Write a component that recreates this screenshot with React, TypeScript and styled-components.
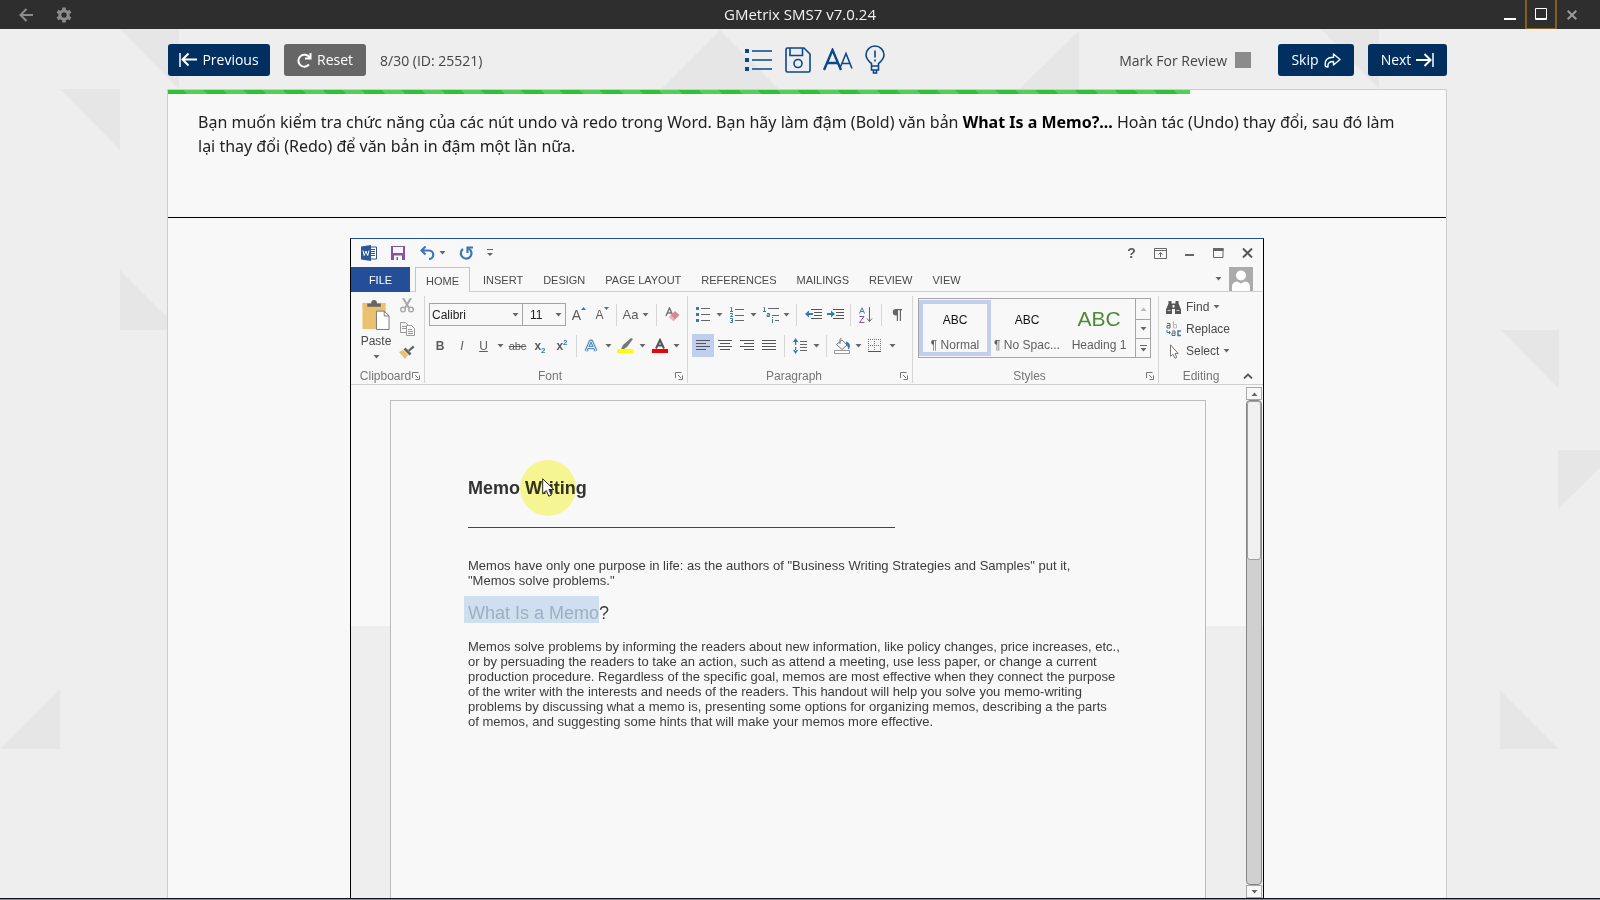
import React from "react";
import styled, { createGlobalStyle, css } from "styled-components";

const UI = '"Open Sans", "Noto Sans", sans-serif';
const ARIAL = '"Liberation Sans", Arial, sans-serif';
const NAVY = "#002f60";
const WORD_BLUE = "#244f98";
const INK = "#5c5c5c";
const ACCENT = "#3a77b5";

const GlobalStyle = createGlobalStyle`
  * { box-sizing: border-box; }
  body { margin: 0; background: #eeeeee; font-family: ${UI}; }
  button { font: inherit; color: inherit; background: none; border: 0; padding: 0; margin: 0; cursor: pointer; }
  svg { display: block; flex: none; }
  h1, h2, p { margin: 0; }
`;

const Shell = styled.div`
  position: relative;
  height: 100vh;
  display: flex;
  flex-direction: column;
  overflow: hidden;
`;

const Backdrop = styled.svg<{ $side: "left" | "right" }>`
  position: absolute;
  top: 0;
  ${(p) => p.$side}: 0;
  z-index: -1;
`;

/* ---------- application title bar ---------- */

const TitleBar = styled.header`
  flex: none;
  height: 29px;
  display: grid;
  grid-template-columns: 1fr auto 1fr;
  background: #2e2e2e;
  color: #f2f2f2;
`;

const TitleText = styled.h1`
  font-size: 15px;
  line-height: 29px;
  font-weight: 400;
`;

const TitleTools = styled.div<{ $end?: boolean }>`
  display: flex;
  align-items: stretch;
  ${(p) =>
    p.$end
      ? css`justify-content: flex-end; padding-right: 13px;`
      : css`padding-left: 8px;`}
`;

const TitleButton = styled.button<{ $focus?: boolean; $wide?: boolean }>`
  width: ${(p) => (p.$wide ? 37 : 30)}px;
  display: flex;
  align-items: center;
  justify-content: center;
  ${(p) =>
    p.$focus &&
    css`
      width: 32px;
      border: 2px solid #83601f;
      border-top: 0;
      border-bottom-width: 1px;
    `}
`;

/* ---------- test toolbar ---------- */

const Main = styled.main`
  flex: 1;
  min-height: 0;
  display: flex;
  flex-direction: column;
  padding: 0 153px 0 167px;
`;

const Toolbar = styled.div`
  flex: none;
  height: 60px;
  padding-top: 2px;
  display: grid;
  grid-template-columns: 1fr auto 1fr;
  align-items: center;
  font-size: 14px;
  color: #444;
`;

const ToolSide = styled.div<{ $end?: boolean }>`
  display: flex;
  align-items: center;
  gap: 14px;
  padding-left: 1px;
  justify-content: ${(p) => (p.$end ? "flex-end" : "flex-start")};
`;

const ToolCenter = styled.div`
  display: flex;
  align-items: center;
  gap: 12px;
  padding-left: 14px;
`;

const ActionButton = styled.button<{ $tone?: string; $w: number }>`
  width: ${(p) => p.$w}px;
  height: 32px;
  display: flex;
  align-items: center;
  justify-content: center;
  gap: 5px;
  border-radius: 3px;
  background: ${(p) => p.$tone ?? NAVY};
  color: #fff;
  font-size: 14px;
  line-height: 20px;
`;

const ReviewLabel = styled.label`
  display: flex;
  align-items: center;
  gap: 8px;
  margin-right: 13px;
`;

const ReviewBox = styled.input`
  appearance: none;
  width: 16px;
  height: 16px;
  margin: 0;
  background: #8b8b8b;
`;

/* ---------- question card ---------- */

const Card = styled.section`
  flex: 1;
  min-height: 0;
  display: flex;
  flex-direction: column;
  background: #f8f8f8;
  border: 1px solid #cdcdcd;
  border-bottom: 0;
`;

const Progress = styled.div`
  flex: none;
  height: 4px;
`;

const ProgressFill = styled.div`
  height: 100%;
  background: repeating-linear-gradient(45deg, #30c036 0 14px, #50d155 14px 28px);
`;

const Question = styled.div`
  flex: none;
  height: 124px;
  padding: 16px 44px 0 30px;
  border-bottom: 1px solid #000;
  color: #222;
  font-family: "Noto Sans", "Open Sans", sans-serif;
  font-size: 16px;
  line-height: 24px;

  b { color: #000; }
`;

const Stage = styled.div`
  flex: 1;
  min-height: 0;
  padding-top: 20px;
  display: flex;
  justify-content: center;
`;

/* ---------- word processor ---------- */

const WordWindow = styled.div`
  width: 914px;
  display: flex;
  flex-direction: column;
  border: 1px solid #000;
  border-top-color: ${WORD_BLUE};
  border-bottom: 0;
  font-family: ${ARIAL};
  font-size: 12px;
  color: #4a4a4a;
`;

const QuickBar = styled.div`
  flex: none;
  height: 28px;
  display: flex;
  align-items: center;
  padding: 0 1px 0 10px;
`;

const Grow = styled.div`
  flex: 1;
`;

const TabRow = styled.nav`
  flex: none;
  height: 25px;
  display: flex;
  align-items: stretch;
  border-bottom: 1px solid #cfcfcf;
  font-size: 11px;
`;

const FileTab = styled.button`
  width: 59px;
  height: 25px;
  background: ${WORD_BLUE};
  color: #fff;
`;

const Tab = styled.button<{ $active?: boolean }>`
  padding: 2px 10px 0;
  height: 24px;
  ${(p) =>
    p.$active &&
    css`
      height: 25px;
      margin: 0 3px 0 5px;
      background: #f8f8f8;
      border: 1px solid #c4c4c4;
      border-bottom: 0;
    `}
`;

const Account = styled.button`
  display: flex;
  align-items: center;
  gap: 7px;
  margin-right: 10px;
`;

const Ribbon = styled.div`
  flex: none;
  height: 93px;
  display: flex;
  padding-top: 4px;
  border-bottom: 1px solid #cfcfcf;
`;

const Group = styled.section<{ $w?: number }>`
  ${(p) => (p.$w ? `width: ${p.$w}px;` : "flex: 1;")}
  height: 87px;
  display: flex;
  flex-direction: column;
  ${(p) => p.$w && "border-right: 1px solid #d6d6d6;"}
`;

const GroupBody = styled.div<{ $row?: boolean }>`
  flex: 1;
  display: flex;
  flex-direction: ${(p) => (p.$row ? "row" : "column")};
  padding: ${(p) => (p.$row ? "2px 0 0 5px" : "7px 0 0 4px")};
  gap: ${(p) => (p.$row ? 0 : 8)}px;
`;

const GroupFooter = styled.div<{ $indent?: boolean }>`
  flex: none;
  height: 14px;
  display: flex;
  align-items: center;
  padding: 0 4px 0 ${(p) => (p.$indent ? 8 : 0)}px;
  font-size: 12px;
  line-height: 14px;
  color: #767676;

  span { flex: 1; text-align: center; }
`;

const CollapseButton = styled.button`
  width: 14px;
  margin-right: 2px;
`;

const ToolRow = styled.div`
  height: 23px;
  display: flex;
  align-items: center;
`;

const Tool = styled.button<{ $w: number; $on?: boolean }>`
  width: ${(p) => p.$w}px;
  height: 23px;
  display: flex;
  align-items: center;
  justify-content: center;
  color: ${INK};
  background: ${(p) => (p.$on ? "#c0cfee" : "none")};
`;

const Divider = styled.i<{ $m: number }>`
  width: 1px;
  height: 22px;
  margin: 0 ${(p) => p.$m}px;
  background: #d6d6d6;
`;

const Letter = styled.span<{ $s: number; $b?: boolean }>`
  font-size: ${(p) => p.$s}px;
  font-weight: ${(p) => (p.$b ? 700 : 400)};

  sub, sup { font-size: 8px; line-height: 0; color: ${ACCENT}; }
`;

const SelectBox = styled.span<{ $w: number }>`
  position: relative;
  width: ${(p) => p.$w}px;
  height: 23px;

  & + & { margin-left: -1px; }

  svg { position: absolute; right: 4px; top: 10px; pointer-events: none; }
`;

const Select = styled.select<{ $pad: number }>`
  appearance: none;
  width: 100%;
  height: 100%;
  margin: 0;
  padding: 0 0 0 ${(p) => p.$pad}px;
  border: 1px solid #a5a5a5;
  border-radius: 0;
  background: #f8f8f8;
  font: 12px ${ARIAL};
  color: #222;
`;

const Paste = styled.button`
  width: 40px;
  padding-top: 2px;
  display: flex;
  flex-direction: column;
  align-items: center;
  align-self: flex-start;
  gap: 4px;
  font-size: 12px;
  line-height: 14px;

  svg + svg { margin-top: 3px; }
`;

const ClipStack = styled.div`
  display: flex;
  flex-direction: column;
  align-items: center;
  width: 22px;
  gap: 9px;
`;

const Gallery = styled.div`
  display: flex;
  width: 233px;
  height: 60px;
  border: 1px solid #a5a5a5;
`;

const StyleCard = styled.button<{ $on?: boolean }>`
  width: 72px;
  height: 56px;
  margin-top: 1px;
  padding-top: 6px;
  border: 4px solid ${(p) => (p.$on ? "#c0cfee" : "transparent")};
  display: flex;
  flex-direction: column;
  align-items: center;
  white-space: nowrap;
  color: #5f5f5f;
`;

const Sample = styled.span<{ $big?: boolean }>`
  height: 28px;
  font-size: ${(p) => (p.$big ? 21 : 12)}px;
  line-height: ${(p) => (p.$big ? 18 : 20)}px;
  color: ${(p) => (p.$big ? "#4f8a35" : "#111")};
`;

const Spinner = styled.div`
  width: 15px;
  margin-left: auto;
  border-left: 1px solid #a5a5a5;
  display: grid;
  grid-template-rows: 20px 19px 19px;

  button { display: flex; align-items: center; justify-content: center; }
  button + button { border-top: 1px solid #a5a5a5; }
`;

const EditList = styled.div`
  flex: 1;
  display: flex;
  flex-direction: column;
  padding-left: 7px;
`;

const EditItem = styled.button`
  height: 22px;
  display: flex;
  align-items: center;
  gap: 4px;
`;

/* ---------- document ---------- */

const Workspace = styled.div`
  flex: 1;
  min-height: 0;
  display: flex;
  padding-left: 39px;
  background: linear-gradient(#f8f8f8 241px, #eeeeee 241px);
`;

const Page = styled.article`
  flex: 1;
  margin-top: 15px;
  padding: 74px 77px 0;
  background: #f8f8f8;
  border: 1px solid #bdbdbd;
  border-bottom: 0;
  color: #3c3c3c;
`;

const DocTitle = styled.h2`
  position: relative;
  width: max-content;
  font-size: 18px;
  line-height: 26px;
  font-weight: 700;
  color: #333;
`;

const Rule = styled.hr`
  width: 427px;
  height: 1px;
  margin: 26px 0 30px;
  border: 0;
  background: #444;
`;

const DocText = styled.p`
  font-size: 13px;
  line-height: 15px;
  white-space: nowrap;
`;

const DocHeading = styled.h2`
  margin: 8px 0 16px -4px;
  display: flex;
  font-size: 18px;
  line-height: 35px;
  font-weight: 400;
  height: 27px;
`;

const Selected = styled.mark`
  height: 27px;
  padding-left: 4px;
  background: #cfdff0;
  color: #9dafc5;
`;

const Pointer = styled.svg`
  position: absolute;
  left: 52px;
  top: -15px;
  mix-blend-mode: multiply;
`;

const PointerArrow = styled.svg`
  position: absolute;
  left: 74px;
  top: 2px;
`;

const ScrollBar = styled.div`
  width: 17px;
  margin-left: 40px;
  padding: 2px 1px 0 0;
  display: flex;
  flex-direction: column;
`;

const ScrollButton = styled.button`
  height: 13px;
  flex: none;
  display: flex;
  align-items: center;
  justify-content: center;
  border: 1px solid #a8a8a8;
  background: #f8f8f8;
`;

const ScrollTrack = styled.div`
  flex: 1;
  border: 1px solid #858585;
  border-radius: 4px;
  background: #d0d0d0;
`;

const ScrollThumb = styled.div`
  height: 159px;
  border: 1px solid #a0a0a0;
  border-radius: 3px;
  background: #f0f0f0;
`;

const BottomEdge = styled.div`
  flex: none;
  height: 2px;
  background: #8a8b9c;
  border-top: 1px solid #10131f;
`;

/* ---------- icons ---------- */

const Caret = ({ color = "#666" }: { color?: string }) => (
  <svg width="7" height="4" viewBox="0 0 7 4"><path d="M0.5 0h6l-3 3.5z" fill={color} /></svg>
);

const CaretUp = ({ color = "#666" }: { color?: string }) => (
  <svg width="7" height="4" viewBox="0 0 7 4"><path d="M0.5 4h6l-3-3.5z" fill={color} /></svg>
);

const Lines = ({ widths, align = 0 }: { widths: number[]; align?: number }) => (
  <svg width="14" height="11" viewBox="0 0 14 11" fill="#555">
    {widths.map((w, i) => (
      <rect key={i} x={(14 - w) * align} y={i * 3} width={w} height="1" />
    ))}
  </svg>
);

const Launcher = () => (
  <svg width="8" height="8" viewBox="0 0 8 8" fill="none" stroke="#777">
    <path d="M0.5 6V0.5H6.5M3 3l3 3M7.5 3.5v4h-4" />
  </svg>
);

const LaunchButton = ({ label }: { label: string }) => (
  <button aria-label={label}><Launcher /></button>
);

const Indent = ({ inc }: { inc?: boolean }) => (
  <svg width="17" height="11" viewBox="0 0 17 11">
    <path d="M6 .5h11M9 3.500h8M9 6.500h8M6 9.500h11" stroke="#555" />
    {inc ? (
      <path d="M0 4h4V1.500L8 5 4 8.500V6H0z" fill={ACCENT} />
    ) : (
      <path d="M8 4H4V1.500L0 5l4 3.500V6h4z" fill={ACCENT} />
    )}
  </svg>
);

export default function App() {
  return (
    <>
      <GlobalStyle />
      <Shell>
        <Backdrop $side="left" width="1100" height="900" viewBox="0 0 1100 900" fill="#e6e6e6">
          <path d="M120 29h59v60zM60 89h60v61zM120 270l60 60h-60zM0 749l60-60v60zM720 30l60 60H660zM1018 90l61-59v59z" />
        </Backdrop>
        <Backdrop $side="right" width="300" height="900" viewBox="1300 0 300 900" fill="#e6e6e6">
          <path d="M1321 29h58v60zM1501 330h58v59zM1558 450h60l-60 59zM1500 690l59 59h-59z" />
        </Backdrop>

        <TitleBar>
          <TitleTools>
            <TitleButton $wide aria-label="Back">
              <svg width="15" height="14" viewBox="0 0 15 14" fill="none" stroke="#8c8c8c" strokeWidth="2">
                <path d="M14 7H2M7.500 1L1.500 7l6 6" />
              </svg>
            </TitleButton>
            <TitleButton $wide aria-label="Settings">
              <svg width="16" height="16" viewBox="0 0 16 16">
                <circle cx="8" cy="8" r="4.200" fill="none" stroke="#8c8c8c" strokeWidth="3" />
                <path d="M8 .5v3M8 12.500v3M1.500 4.250l2.600 1.500M11.900 10.250l2.600 1.500M1.500 11.750l2.600-1.500M11.900 5.750l2.600-1.500" stroke="#8c8c8c" strokeWidth="3.600" />
              </svg>
            </TitleButton>
          </TitleTools>
          <TitleText>GMetrix SMS7 v7.0.24</TitleText>
          <TitleTools $end>
            <TitleButton aria-label="Minimize">
              <svg width="12" height="12" viewBox="0 0 12 12"><rect y="9" width="12" height="2" fill="#fff" /></svg>
            </TitleButton>
            <TitleButton $focus aria-label="Maximize">
              <svg width="12" height="12" viewBox="0 0 12 12" fill="none" stroke="#fff">
                <path d="M.5 .5h11v11H.5zM0 10.500h12" />
              </svg>
            </TitleButton>
            <TitleButton aria-label="Close">
              <svg width="10" height="10" viewBox="0 0 10 10" stroke="#9a9a9a" strokeWidth="2">
                <path d="M.7 .7l8.600 8.600M9.300 .7L.7 9.300" />
              </svg>
            </TitleButton>
          </TitleTools>
        </TitleBar>

        <Main>
          <Toolbar>
            <ToolSide>
              <ActionButton $w={102}>
                <svg width="18" height="16" viewBox="0 0 18 16" fill="none" stroke="#fff" strokeWidth="2">
                  <path d="M1 1v14" strokeWidth="1.500" /><path d="M18 7.500H4M9.500 1.500l-6 6 6 6" />
                </svg>
                Previous
              </ActionButton>
              <ActionButton $w={82} $tone="#666666">
                <svg width="15" height="15" viewBox="0 0 15 15" fill="none" stroke="#fff" strokeWidth="2">
                  <path d="M12 11.500A6 6 0 1 1 12.500 4.500M13.500 0v5.500H8" />
                </svg>
                Reset
              </ActionButton>
              <span>8/30 (ID: 25521)</span>
            </ToolSide>
            <ToolCenter>
              <button aria-label="Task list">
                <svg width="30" height="26" viewBox="0 0 30 26" fill="#0b478c">
                  <path d="M2 2h4v4H2zM2 11h4v4H2zM2 20h4v4H2zM9 3.200h20v1.600H9zM9 12.200h20v1.600H9zM9 21.200h20v1.600H9z" />
                </svg>
              </button>
              <button aria-label="Save">
                <svg width="26" height="26" viewBox="0 0 26 26" fill="none" stroke="#0b478c" strokeWidth="1.600">
                  <path d="M1 2.500Q1 1 2.500 1H19l6 6v16.500q0 1.500-1.500 1.500h-21Q1 25 1 23.500zM5 1v7.500h12.500V1" />
                  <circle cx="13" cy="16.500" r="4" />
                </svg>
              </button>
              <button aria-label="Text size">
                <svg width="30" height="24" viewBox="0 0 30 24" fill="none" stroke="#0b478c">
                  <path d="M1 22L9.500 2 18 22M4 15h11" strokeWidth="2.400" />
                  <path d="M17 20L23 5.500 29 20.500M19 15.500h8" strokeWidth="1.600" />
                </svg>
              </button>
              <button aria-label="Hint">
                <svg width="20" height="30" viewBox="0 0 20 30" fill="none" stroke="#0b478c" strokeWidth="1.600">
                  <path d="M6.500 21v-2.500C3.500 16 1 14 1 10a9 9 0 0 1 18 0c0 4-2.500 6-5.500 8.500V21zM6.500 21v4h7v-4M8.500 25v3h3v-3" />
                  <path d="M10 5.500v7M10 14.500v2" />
                </svg>
              </button>
            </ToolCenter>
            <ToolSide $end>
              <ReviewLabel>
                Mark For Review
                <ReviewBox type="checkbox" />
              </ReviewLabel>
              <ActionButton $w={76}>
                Skip
                <svg width="17" height="15" viewBox="0 0 17 15" fill="none" stroke="#fff" strokeWidth="1.400">
                  <path d="M1.500 13.500C0 7 4 4 9.500 4.200V1l6.500 5.500-6.500 5.500V8.500C5.500 8.500 3.500 10 4 14z" strokeLinejoin="round" />
                </svg>
              </ActionButton>
              <ActionButton $w={79}>
                Next
                <svg width="18" height="16" viewBox="0 0 18 16" fill="none" stroke="#fff" strokeWidth="2">
                  <path d="M17 1v14" strokeWidth="1.500" /><path d="M0 8h14M8.500 2l6 6-6 6" />
                </svg>
              </ActionButton>
            </ToolSide>
          </Toolbar>

          <Card>
            <Progress role="progressbar" aria-label="Test progress" aria-valuenow={80}>
              <ProgressFill style={{ width: "80%" }} />
            </Progress>
            <Question>
              Bạn muốn kiểm tra chức năng của các nút undo và redo trong Word. Bạn hãy làm đậm (Bold) văn bản{" "}
              <b>What Is a Memo?...</b> Hoàn tác (Undo) thay đổi, sau đó làm lại thay đổi (Redo) để văn bản in đậm
              một lần nữa.
            </Question>

            <Stage>
              <WordWindow>
                <QuickBar>
                  <svg width="16" height="16" viewBox="0 0 16 16">
                    <path d="M9 2h6.500v12H9z" fill="#fff" stroke="#2b579a" />
                    <path d="M10 4.500h4M10 6.500h4M10 8.500h4M10 10.500h4" stroke="#2b579a" />
                    <path d="M0 1.500L10 0v16L0 14.500z" fill="#2b579a" />
                    <path d="M2 5.500l1.200 5L5 6l1.700 4.500 1.300-5" fill="none" stroke="#fff" />
                  </svg>
                  <Tool $w={42} aria-label="Save document">
                    <svg width="14" height="14" viewBox="0 0 14 14">
                      <path d="M0 0h14v14H0z" fill="#8356a5" />
                      <path d="M2 1h10v6H2zM3 9.500h8V14H7v-3H5.500v3H3z" fill="#f8f8f8" />
                    </svg>
                  </Tool>
                  <Tool $w={16} aria-label="Undo">
                    <svg width="15" height="14" viewBox="0 0 15 14" fill="none" stroke={ACCENT} strokeWidth="2.200">
                      <path d="M2 4.500h7a4 4 0 0 1 0 8.500M5.500 .5l-4 4 4 4" />
                    </svg>
                  </Tool>
                  <Tool $w={14} aria-label="Undo history"><Caret /></Tool>
                  <Tool $w={34} aria-label="Redo">
                    <svg width="14" height="14" viewBox="0 0 14 14" fill="none" stroke={ACCENT} strokeWidth="2.200">
                      <path d="M9.500 2.500A5.300 5.300 0 1 1 4 3" /><path d="M8.500 7V1.500H14" />
                    </svg>
                  </Tool>
                  <Tool $w={14} aria-label="Customize quick access">
                    <svg width="6" height="8" viewBox="0 0 6 8" fill="#666"><path d="M0 0h6v1H0zM0 4h6L3 7z" /></svg>
                  </Tool>
                  <Grow />
                  <Tool $w={29} aria-label="Help"><Letter $s={14} $b>?</Letter></Tool>
                  <Tool $w={29} aria-label="Ribbon display options">
                    <svg width="13" height="11" viewBox="0 0 13 11" fill="none" stroke="#666">
                      <path d="M.5 .5h12v10H.5zM.5 2.500h12M6.500 9V5M4.500 6.500l2-2 2 2" />
                    </svg>
                  </Tool>
                  <Tool $w={29} aria-label="Minimize document">
                    <svg width="10" height="10" viewBox="0 0 10 10"><rect y="6" width="9" height="2" fill="#666" /></svg>
                  </Tool>
                  <Tool $w={29} aria-label="Maximize document">
                    <svg width="11" height="10" viewBox="0 0 11 10"><path d="M.5 .5h9.500v9H.5z" fill="none" stroke="#666" /><path d="M0 0h10.500v3H0z" fill="#666" /></svg>
                  </Tool>
                  <Tool $w={29} aria-label="Close document">
                    <svg width="11" height="10" viewBox="0 0 11 10" stroke="#555" strokeWidth="2"><path d="M1 .5l9 9M10 .5l-9 9" /></svg>
                  </Tool>
                </QuickBar>

                <TabRow>
                  <FileTab>FILE</FileTab>
                  <Tab $active>HOME</Tab>
                  <Tab>INSERT</Tab>
                  <Tab>DESIGN</Tab>
                  <Tab>PAGE LAYOUT</Tab>
                  <Tab>REFERENCES</Tab>
                  <Tab>MAILINGS</Tab>
                  <Tab>REVIEW</Tab>
                  <Tab>VIEW</Tab>
                  <Grow />
                  <Account aria-label="Account">
                    <Caret />
                    <svg width="24" height="24" viewBox="0 0 24 24">
                      <path d="M0 0h24v24H0z" fill="#ababab" />
                      <circle cx="12" cy="8.500" r="5" fill="#fff" />
                      <path d="M3 24v-4q0-5 5-5.500l4 2 4-2q5 .5 5 5.500v4z" fill="#fff" />
                    </svg>
                  </Account>
                </TabRow>

                <Ribbon>
                  <Group $w={74}>
                    <GroupBody $row>
                      <Paste>
                        <svg width="28" height="30" viewBox="0 0 28 31">
                          <path d="M0 3h24v27H0z" fill="#e9c170" />
                          <path d="M5 7V3.500h4q0-3.500 3-3.500t3 3.500h4V7z" fill="#666" />
                          <path d="M14.500 11.500h8l5 5v14h-13z" fill="#fff" stroke="#777" />
                          <path d="M22.500 11.500v5h5" fill="none" stroke="#777" />
                        </svg>
                        Paste
                        <Caret />
                      </Paste>
                      <ClipStack>
                        <button aria-label="Cut">
                          <svg width="14" height="15" viewBox="0 0 14 15" fill="none" stroke="#a8a8a8" strokeWidth="1.500">
                            <path d="M3 0l6 10M11 0L5 10" strokeWidth="2" /><circle cx="3" cy="11.500" r="2.300" /><circle cx="11" cy="11.500" r="2.300" />
                          </svg>
                        </button>
                        <button aria-label="Copy">
                          <svg width="15" height="14" viewBox="0 0 15 14" fill="#f8f8f8" stroke="#999">
                            <path d="M.5 .5h5l3 3v7h-8zM2 4.500h4M2 6.500h4" /><path d="M6.500 3.500h5l3 3v7h-8zM8 7.500h4M8 9.500h5M8 11.500h5" />
                          </svg>
                        </button>
                        <button aria-label="Format painter">
                          <svg width="16" height="14" viewBox="0 0 16 14">
                            <path d="M0 7l4-2 5 5-3 4z" fill="#e9c170" /><path d="M4.500 4.500l2-2 6 6-2 2z" fill="#666" /><path d="M9 5l5-4.500 1.500 2-5 4z" fill="#666" />
                          </svg>
                        </button>
                      </ClipStack>
                    </GroupBody>
                    <GroupFooter $indent><span>Clipboard</span><LaunchButton label="Clipboard options" /></GroupFooter>
                  </Group>

                  <Group $w={263}>
                    <GroupBody>
                      <ToolRow>
                        <SelectBox $w={94}>
                          <Select $pad={2} aria-label="Font name" defaultValue="Calibri"><option>Calibri</option></Select>
                          <Caret />
                        </SelectBox>
                        <SelectBox $w={44}>
                          <Select $pad={7} aria-label="Font size" defaultValue="11"><option>11</option></Select>
                          <Caret />
                        </SelectBox>
                        <Tool $w={26} aria-label="Grow font">
                          <Letter $s={14}>A</Letter>
                          <svg width="5" height="18" viewBox="0 0 5 18"><path d="M0 4h5L2.500 1z" fill={ACCENT} /></svg>
                        </Tool>
                        <Tool $w={20} aria-label="Shrink font">
                          <Letter $s={12}>A</Letter>
                          <svg width="5" height="18" viewBox="0 0 5 18"><path d="M0 1h5L2.500 4z" fill={ACCENT} /></svg>
                        </Tool>
                        <Divider $m={4} />
                        <Tool $w={19} aria-label="Change case"><Letter $s={13}>Aa</Letter></Tool>
                        <Tool $w={11} aria-label="Case options"><Caret /></Tool>
                        <Divider $m={5} />
                        <Tool $w={20} aria-label="Clear formatting">
                          <svg width="15" height="15" viewBox="0 0 15 15">
                            <path d="M1 9L4.500 1 8 9M2.500 6h4" fill="none" stroke="#777" strokeWidth="1.500" />
                            <path d="M4 10l6-6 4.500 4-6 6z" fill="#dc8592" /><path d="M4 10l2-1.800 4 4-1.500 1.800z" fill="#eab3ba" />
                          </svg>
                        </Tool>
                      </ToolRow>
                      <ToolRow>
                        <Tool $w={22} aria-label="Bold"><Letter $s={12} $b>B</Letter></Tool>
                        <Tool $w={22} aria-label="Italic"><Letter $s={12}><i>I</i></Letter></Tool>
                        <Tool $w={21} aria-label="Underline"><Letter $s={12}><u>U</u></Letter></Tool>
                        <Tool $w={12} aria-label="Underline options"><Caret /></Tool>
                        <Tool $w={23} aria-label="Strikethrough"><Letter $s={11}><s>abc</s></Letter></Tool>
                        <Tool $w={22} aria-label="Subscript"><Letter $s={12} $b>x<sub>2</sub></Letter></Tool>
                        <Tool $w={22} aria-label="Superscript"><Letter $s={12} $b>x<sup>2</sup></Letter></Tool>
                        <Divider $m={3} />
                        <Tool $w={22} aria-label="Text effects">
                          <svg width="14" height="14" viewBox="0 0 14 14" fill="none" strokeLinejoin="round">
                            <path d="M2 12L6.500 2h1l4.500 10M4 8.500h6" stroke="#bcd4ee" strokeWidth="4" />
                            <path d="M2 12L6.500 2h1l4.500 10M4 8.500h6" stroke={ACCENT} strokeWidth="2.600" />
                            <path d="M2 12L6.500 2h1l4.500 10M4 8.500h6" stroke="#f4f8fc" />
                          </svg>
                        </Tool>
                        <Tool $w={12} aria-label="Text effect options"><Caret /></Tool>
                        <Tool $w={22} aria-label="Highlight">
                          <svg width="16" height="16" viewBox="0 0 16 16">
                            <path d="M4 11l2-4 8-7 2 1-6 8-3 2z" fill="#777" /><path d="M0 11h16v4H0z" fill="#ffff00" />
                          </svg>
                        </Tool>
                        <Tool $w={13} aria-label="Highlight options"><Caret /></Tool>
                        <Tool $w={21} aria-label="Font color">
                          <svg width="16" height="16" viewBox="0 0 16 16">
                            <path d="M4 10.500L8 2l4 8.500M5.500 7.500h5" fill="none" stroke="#555" strokeWidth="2" /><path d="M0 11h16v4H0z" fill="#f50000" />
                          </svg>
                        </Tool>
                        <Tool $w={12} aria-label="Font color options"><Caret /></Tool>
                      </ToolRow>
                    </GroupBody>
                    <GroupFooter><span>Font</span><LaunchButton label="Font options" /></GroupFooter>
                  </Group>

                  <Group $w={225}>
                    <GroupBody>
                      <ToolRow>
                        <Tool $w={21} aria-label="Bullets">
                          <svg width="14" height="15" viewBox="0 0 14 15">
                            <path d="M0 0h3v3H0zM0 6h3v3H0zM0 12h3v3H0z" fill={ACCENT} /><path d="M5 1.500h9M5 7.500h9M5 13.500h9" stroke="#666" />
                          </svg>
                        </Tool>
                        <Tool $w={13} aria-label="Bullet options"><Caret /></Tool>
                        <Tool $w={21} aria-label="Numbering">
                          <svg width="14" height="16" viewBox="0 0 14 16">
                            <path d="M.5 .5h1v4M0 4.500h3M0 6.500h2.500v1.200L.5 9.500h2.500M0 11.500h2.500v4H0M1 13.500h1.500" fill="none" stroke={ACCENT} />
                            <path d="M5 2.500h9M5 8.500h9M5 13.500h9" stroke="#666" />
                          </svg>
                        </Tool>
                        <Tool $w={13} aria-label="Numbering options"><Caret /></Tool>
                        <Tool $w={21} aria-label="Multilevel list">
                          <svg width="16" height="16" viewBox="0 0 16 16">
                            <path d="M.5 .5h1v4M0 4.500h3M4 6.500h2.500v3H4v-1.500h2.500M9.500 12v4M9.500 10v1" fill="none" stroke={ACCENT} />
                            <path d="M5 1.500h11M9 8.500h7M12 13.500h4" stroke="#666" />
                          </svg>
                        </Tool>
                        <Tool $w={10} aria-label="Multilevel options"><Caret /></Tool>
                        <Divider $m={5} />
                        <Tool $w={22} aria-label="Decrease indent"><Indent /></Tool>
                        <Tool $w={22} aria-label="Increase indent"><Indent inc /></Tool>
                        <Divider $m={4} />
                        <Tool $w={22} aria-label="Sort">
                          <svg width="14" height="16" viewBox="0 0 14 16" fill="none">
                            <path d="M.5 6.500L3 .8l2.500 5.700M1.500 4.500h3" stroke={ACCENT} /><path d="M.5 9.500h4.500L.5 15.500h5" stroke="#8356a5" />
                            <path d="M10.500 0v14M8 11.500l2.500 3 2.500-3" stroke="#666" />
                          </svg>
                        </Tool>
                        <Divider $m={4} />
                        <Tool $w={22} aria-label="Show marks">
                          <svg width="10" height="12" viewBox="0 0 10 12"><path d="M4 6.500A3.200 3.200 0 0 1 4 0h6v1.200H9V12H7.800V1.200H6V12H4.800V6.500z" fill="#666" /></svg>
                        </Tool>
                      </ToolRow>
                      <ToolRow>
                        <Tool $w={22} $on aria-label="Align left"><Lines widths={[14, 10, 14, 10]} /></Tool>
                        <Tool $w={22} aria-label="Center"><Lines widths={[14, 10, 14, 10]} align={0.5} /></Tool>
                        <Tool $w={22} aria-label="Align right"><Lines widths={[14, 10, 14, 10]} align={1} /></Tool>
                        <Tool $w={22} aria-label="Justify"><Lines widths={[14, 14, 14, 14]} /></Tool>
                        <Divider $m={4} />
                        <Tool $w={22} aria-label="Line spacing">
                          <svg width="14" height="16" viewBox="0 0 14 16">
                            <path d="M2 3h1.200v4H2zM2 9h1.200v4H2zM0 4l2.600-4 2.600 4zM0 12l2.600 4 2.600-4z" fill={ACCENT} /><path d="M7 3.500h7M7 6.500h7M7 9.500h7M7 12.500h7" stroke="#666" />
                          </svg>
                        </Tool>
                        <Tool $w={10} aria-label="Line spacing options"><Caret /></Tool>
                        <Divider $m={5} />
                        <Tool $w={20} aria-label="Shading">
                          <svg width="17" height="16" viewBox="0 0 17 16" fill="none">
                            <path d="M2.500 6.500L8 2l5 5-5 4.500zM6 6V2q0-2 1.500-1.500" stroke="#777" />
                            <path d="M12 3.500q4 1 4 4.500 0 3-2 3.500 0-4-2-5z" fill={ACCENT} />
                            <path d="M.5 12.500h15v3H.5z" fill="#fff" stroke="#999" />
                          </svg>
                        </Tool>
                        <Tool $w={12} aria-label="Shading options"><Caret /></Tool>
                        <Tool $w={22} aria-label="Borders">
                          <svg width="14" height="14" viewBox="0 0 14 14" fill="none" stroke="#777" strokeDasharray="1 1">
                            <path d="M.5 0v13M6.500 0v13M12.500 0v13M0 .5h13M0 6.500h13" /><path d="M0 12.500h13" strokeDasharray="none" stroke="#555" />
                          </svg>
                        </Tool>
                        <Tool $w={12} aria-label="Border options"><Caret /></Tool>
                      </ToolRow>
                    </GroupBody>
                    <GroupFooter><span>Paragraph</span><LaunchButton label="Paragraph options" /></GroupFooter>
                  </Group>

                  <Group $w={246}>
                    <GroupBody $row>
                      <Gallery>
                        <StyleCard $on><Sample>ABC</Sample>¶ Normal</StyleCard>
                        <StyleCard><Sample>ABC</Sample>¶ No Spac...</StyleCard>
                        <StyleCard><Sample $big>ABC</Sample>Heading 1</StyleCard>
                        <Spinner>
                          <button aria-label="Previous styles"><CaretUp color="#bbb" /></button>
                          <button aria-label="Next styles"><Caret /></button>
                          <button aria-label="More styles">
                            <svg width="7" height="7" viewBox="0 0 7 7" fill="#666"><path d="M0 0h7v1H0zM0.500 3h6l-3 3.500z" /></svg>
                          </button>
                        </Spinner>
                      </Gallery>
                    </GroupBody>
                    <GroupFooter><span>Styles</span><LaunchButton label="Style options" /></GroupFooter>
                  </Group>

                  <Group>
                    <EditList>
                      <EditItem>
                        <svg width="16" height="13" viewBox="0 0 16 13" fill="#555">
                          <path d="M2.500 0h3v2.500H9.500V0h3v2.500l2.500 6V13H9V8H6v5H0V8.500l2.500-6z" /><path d="M6.500 4h2v2.500h-2zM1.500 9h3v.8h-3zM10.500 9h3v.8h-3z" fill="#f8f8f8" />
                        </svg>
                        Find <Caret />
                      </EditItem>
                      <EditItem>
                        <svg width="16" height="16" viewBox="0 0 16 16" fill="none">
                          <path d="M1 2.500h3V7H1V4.500h3" stroke="#666" /><path d="M7.500 0v7h3V3.500h-3" stroke="#bbb" />
                          <path d="M1 9v2.500h3M3 10l1.500 1.500L3 13" stroke={ACCENT} />
                          <path d="M6 10h3v4.500H6V12h3" stroke="#666" /><path d="M15 10h-3v4.500h3" stroke={ACCENT} strokeWidth="1.500" />
                        </svg>
                        Replace
                      </EditItem>
                      <EditItem>
                        <svg width="16" height="15" viewBox="0 0 16 15" fill="#fff" stroke="#777">
                          <path d="M4.500 .8v11.500l2.500-2 2 4 1.800-1-1.800-3.800h3.200z" />
                        </svg>
                        Select <Caret />
                      </EditItem>
                    </EditList>
                    <GroupFooter>
                      <span>Editing</span>
                      <CollapseButton aria-label="Collapse ribbon">
                        <svg width="10" height="6" viewBox="0 0 10 6" fill="none" stroke="#555" strokeWidth="1.800"><path d="M1 5.500L5 1.500l4 4" /></svg>
                      </CollapseButton>
                    </GroupFooter>
                  </Group>
                </Ribbon>

                <Workspace>
                  <Page>
                    <DocTitle>
                      Memo Writing
                      <Pointer width="56" height="56" viewBox="0 0 56 56"><circle cx="28" cy="28" r="28" fill="#fcfc96" /></Pointer>
                      <PointerArrow width="13" height="21" viewBox="0 0 13 21">
                        <path d="M.7 1.800v15l3.600-3.300 2.500 5.700 2.600-1.200-2.500-5.400h5z" fill="#fff" stroke="#222" />
                      </PointerArrow>
                    </DocTitle>
                    <Rule />
                    <DocText>
                      Memos have only one purpose in life: as the authors of "Business Writing Strategies and Samples" put it,<br />
                      "Memos solve problems."
                    </DocText>
                    <DocHeading><Selected>What Is a Memo</Selected>?</DocHeading>
                    <DocText>
                      Memos solve problems by informing the readers about new information, like policy changes, price increases, etc.,<br />
                      or by persuading the readers to take an action, such as attend a meeting, use less paper, or change a current<br />
                      production procedure. Regardless of the specific goal, memos are most effective when they connect the purpose<br />
                      of the writer with the interests and needs of the readers. This handout will help you solve you memo-writing<br />
                      problems by discussing what a memo is, presenting some options for organizing memos, describing a the parts<br />
                      of memos, and suggesting some hints that will make your memos more effective.
                    </DocText>
                  </Page>
                  <ScrollBar>
                    <ScrollButton aria-label="Scroll up"><CaretUp /></ScrollButton>
                    <ScrollTrack><ScrollThumb /></ScrollTrack>
                    <ScrollButton aria-label="Scroll down"><Caret /></ScrollButton>
                  </ScrollBar>
                </Workspace>
              </WordWindow>
            </Stage>
          </Card>
        </Main>
        <BottomEdge />
      </Shell>
    </>
  );
}
